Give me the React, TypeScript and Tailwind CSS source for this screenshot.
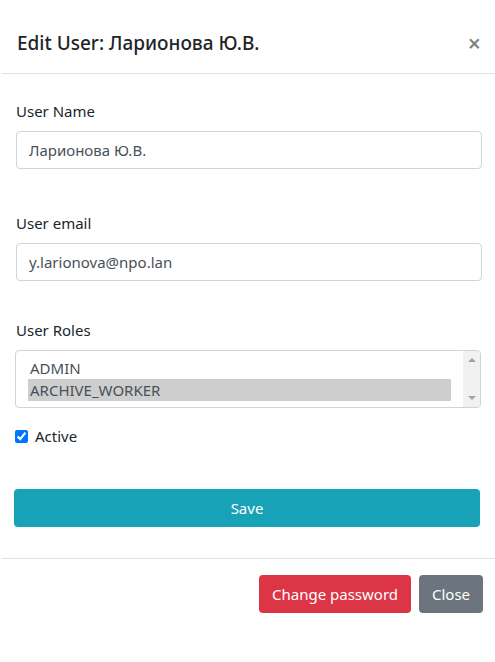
import React from 'react';

const font = { fontFamily: '"Noto Sans", "Open Sans", sans-serif' };

function RolesList({ roles, selected }: { roles: string[]; selected: string }) {
  return (
    <div className="relative flex h-[58px] w-[466px] rounded-[4px] border border-[#ced4da] bg-white">
      <div className="flex-1 pl-[12px] pr-[12px] pt-[6px]">
        {roles.map((r) => (
          <div
            key={r}
            className={`h-[22px] px-[2px] text-[15px] leading-[22px] text-[#495057] ${r === selected ? 'bg-[#cecece] text-[#3a3a3a]' : ''}`}
          >
            {r}
          </div>
        ))}
      </div>
      <div className="flex w-[17px] flex-col items-center justify-between rounded-r-[3px] bg-[#f1f1f1] py-[7px]">
        <div className="h-0 w-0 border-x-[4px] border-b-[4px] border-x-transparent border-b-[#a3a3a3]" />
        <div className="h-0 w-0 border-x-[4px] border-t-[4px] border-x-transparent border-t-[#a3a3a3]" />
      </div>
    </div>
  );
}

export default function App() {
  return (
    <div className="h-[662px] w-[495px] bg-white text-[#212529]" style={font}>
      <div className="ml-[2px] flex items-center justify-between border-b border-[#dee2e6] pb-[15px] pl-[15px] pr-[14px] pt-[28px]">
        <h5 className="text-[19px] font-medium leading-[30px]">Edit User: Ларионова Ю.В.</h5>
        <span className="text-[23px] font-semibold leading-[30px] text-black/50">×</span>
      </div>

      <div className="px-[16px] pt-[25px]">
        <label className="block text-[15px] leading-[24px]">User Name</label>
        <input
          readOnly
          value="Ларионова Ю.В."
          className="mt-[8px] h-[38px] w-[466px] rounded-[4px] border border-[#ced4da] px-[12px] text-[15px] text-[#495057] outline-none"
          style={font}
        />

        <label className="mt-[42px] block text-[15px] leading-[24px]">User email</label>
        <input
          readOnly
          value="y.larionova@npo.lan"
          className="mt-[8px] h-[38px] w-[466px] rounded-[4px] border border-[#ced4da] px-[12px] text-[15px] text-[#495057] outline-none"
          style={font}
        />

        <label className="mt-[37px] block text-[15px] leading-[24px]">User Roles</label>
        <div className="-ml-px mt-[8px]">
          <RolesList roles={['ADMIN', 'ARCHIVE_WORKER']} selected="ARCHIVE_WORKER" />
        </div>

        <div className="mt-[16px] flex h-[24px] items-center">
          <input type="checkbox" readOnly checked className="-ml-px h-[13px] w-[13px] accent-[#0075ff]" />
          <span className="ml-[7px] text-[15px] leading-[24px]">Active</span>
        </div>

        <button
          className="-ml-[2px] mt-[41px] h-[38px] w-[466px] rounded-[4px] bg-[#17a2b8] text-[15px] text-white"
          style={font}
        >
          Save
        </button>
      </div>

      <div className="ml-[2px] mt-[31px] flex justify-end gap-[8px] border-t border-[#dee2e6] pr-[12px] pt-[16px]">
        <button className="h-[38px] w-[152px] rounded-[4px] bg-[#dc3545] text-[15px] text-white" style={font}>
          Change password
        </button>
        <button className="h-[38px] w-[64px] rounded-[4px] bg-[#6c757d] text-[15px] text-white" style={font}>
          Close
        </button>
      </div>
    </div>
  );
}
